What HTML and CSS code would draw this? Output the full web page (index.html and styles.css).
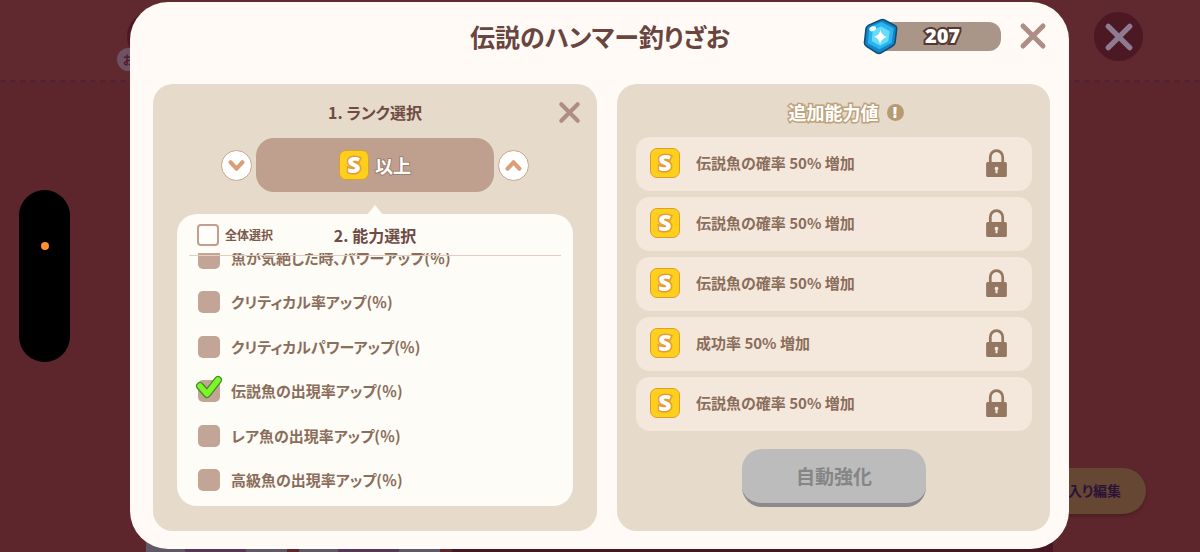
FILE: index.html
```html
<!DOCTYPE html>
<html lang="ja">
<head>
<meta charset="utf-8">
<meta name="viewport" content="width=device-width, initial-scale=1">
<title>伝説のハンマー釣りざお</title>
<link rel="stylesheet" href="styles.css">
</head>
<body>
<svg class="sprites" aria-hidden="true">
  <symbol id="cross" viewBox="0 0 28 28"><path d="M4 4 24 24M24 4 4 24" fill="none" stroke="currentColor" stroke-width="5" stroke-linecap="round"/></symbol>
  <symbol id="chevron" viewBox="0 0 16 12"><path d="M2.500 3 8 9l5.500-6" fill="none" stroke="currentColor" stroke-width="4" stroke-linecap="round" stroke-linejoin="round"/></symbol>
  <symbol id="lock" viewBox="0 0 20 27"><path d="M4 13V8a6 6.500 0 0 1 12 0v5" fill="none" stroke="currentColor" stroke-width="2.600"/><path fill="currentColor" fill-rule="evenodd" d="M1.500 12.500h17a1.500 1.500 0 0 1 1.500 1.500v11.500a1.500 1.500 0 0 1-1.500 1.500h-17A1.500 1.500 0 0 1 0 25.500V14a1.500 1.500 0 0 1 1.500-1.500ZM10 17a1.800 1.800 0 0 0-1 3.300V23.500h2V20.300A1.800 1.800 0 0 0 10 17Z"/></symbol>
  <symbol id="tick" viewBox="0 0 28 24"><path d="M5 11 12 19 23 5" fill="none" stroke="#3d8f22" stroke-width="8" stroke-linecap="round" stroke-linejoin="round"/><path d="M5 11 12 19 23 5" fill="none" stroke="#7df52a" stroke-width="5.500" stroke-linecap="round" stroke-linejoin="round"/></symbol>
</svg>

<div class="scene">
  <div class="backdrop" aria-hidden="true">
    <div class="backdrop-bar">
      <span class="bubble"><span class="bubble-tag">お</span></span>
      <span class="back-close"><svg><use href="#cross"/></svg></span>
    </div>
    <div class="backdrop-floor"><span class="edit-pill">お気に入り編集</span></div>
    <div class="slots"><i class="slot"></i><i class="slot"></i><i class="shelf"></i></div>
  </div>

  <div class="notch" aria-hidden="true"><i class="notch-light"></i></div>

  <main class="dialog" role="dialog" aria-labelledby="dialog-title">
    <header class="dialog-head">
      <h1 id="dialog-title" class="dialog-title">伝説のハンマー釣りざお</h1>
      <div class="head-tools">
        <div class="wallet">
          <svg class="gem" viewBox="0 0 36 38" aria-hidden="true">
            <path d="M18 2Q20 1 22 2L33 8Q35 9 34.500 12L33 25Q32.500 28 30 29L19 35.500Q17 37 14.500 36L4 29.500Q1.500 28 1.500 25.500L3 12Q3 9 5.500 7.500Z" fill="#1387c9" stroke="#0c4c79" stroke-width="1.600"/>
            <path d="M19 4 31.500 10.500 29.500 25.500 17 32 5 26 6.500 10Z" fill="#2cb4ed"/>
            <path d="M18.500 8.500 27.500 13.500 26 24 17.500 28.500 9 23.500 10 13Z" fill="#66dcf8"/>
            <ellipse cx="10" cy="11" rx="3.600" ry="2.500" transform="rotate(-20 10 11)" fill="#eaffff"/>
            <path d="M18 12Q19 18 24.500 19.500 19 21 17.500 27 16.500 21 11.500 19 17 18 18 12Z" fill="#fff"/>
          </svg>
          <span class="wallet-count">207</span>
        </div>
        <button class="icon-button" type="button" aria-label="閉じる"><svg class="cross-large"><use href="#cross"/></svg></button>
      </div>
    </header>

    <div class="panels">
      <section class="panel">
        <div class="panel-head">
          <h2 class="step-title">1. ランク選択</h2>
          <button class="icon-button panel-close" type="button" aria-label="選択を閉じる"><svg class="cross-small"><use href="#cross"/></svg></button>
        </div>
        <div class="rank">
          <button class="round-button" type="button" aria-label="ランクを下げる"><svg class="chevron"><use href="#chevron"/></svg></button>
          <div class="rank-value"><span class="badge">S</span><span class="rank-text">以上</span></div>
          <button class="round-button" type="button" aria-label="ランクを上げる"><svg class="chevron chevron-up"><use href="#chevron"/></svg></button>
        </div>
        <div class="ability">
          <div class="ability-head">
            <label class="select-all"><input class="box box-empty" type="checkbox">全体選択</label>
            <h2 class="step-title">2. 能力選択</h2>
          </div>
          <div class="ability-clip">
            <ul class="ability-list">
              <li><label class="option"><span class="box-wrap"><input class="box" type="checkbox"><svg class="tick"><use href="#tick"/></svg></span>魚が気絶した時､パワーアップ(％)</label></li>
              <li><label class="option"><span class="box-wrap"><input class="box" type="checkbox"><svg class="tick"><use href="#tick"/></svg></span>クリティカル率アップ(％)</label></li>
              <li><label class="option"><span class="box-wrap"><input class="box" type="checkbox"><svg class="tick"><use href="#tick"/></svg></span>クリティカルパワーアップ(％)</label></li>
              <li><label class="option"><span class="box-wrap"><input class="box" type="checkbox" checked><svg class="tick"><use href="#tick"/></svg></span>伝説魚の出現率アップ(％)</label></li>
              <li><label class="option"><span class="box-wrap"><input class="box" type="checkbox"><svg class="tick"><use href="#tick"/></svg></span>レア魚の出現率アップ(％)</label></li>
              <li><label class="option"><span class="box-wrap"><input class="box" type="checkbox"><svg class="tick"><use href="#tick"/></svg></span>高級魚の出現率アップ(％)</label></li>
            </ul>
          </div>
        </div>
      </section>

      <section class="panel panel-stats">
        <div class="stats-head">
          <h2 class="stats-title">追加能力値</h2>
          <button class="info" type="button" aria-label="説明">!</button>
        </div>
        <ul class="stats">
          <li class="stat"><span class="badge">S</span><span class="stat-text">伝説魚の確率 50% 増加</span><svg class="lock"><use href="#lock"/></svg></li>
          <li class="stat"><span class="badge">S</span><span class="stat-text">伝説魚の確率 50% 増加</span><svg class="lock"><use href="#lock"/></svg></li>
          <li class="stat"><span class="badge">S</span><span class="stat-text">伝説魚の確率 50% 増加</span><svg class="lock"><use href="#lock"/></svg></li>
          <li class="stat"><span class="badge">S</span><span class="stat-text">成功率 50% 増加</span><svg class="lock"><use href="#lock"/></svg></li>
          <li class="stat"><span class="badge">S</span><span class="stat-text">伝説魚の確率 50% 増加</span><svg class="lock"><use href="#lock"/></svg></li>
        </ul>
        <button class="enhance" type="button" disabled>自動強化</button>
      </section>
    </div>
  </main>
</div>
</body>
</html>
```

FILE: styles.css
```css
* { box-sizing: border-box; }

body {
  margin: 0;
  background: #5c262c;
  color: #8b6d5b;
  font-family: "Noto Sans CJK JP", sans-serif;
  font-feature-settings: "palt";
  font-size: 15px;
  font-weight: 700;
  line-height: 24px;
}

h1, h2, ul { margin: 0; padding: 0; }
ul { list-style: none; }
button { padding: 0; border: 0; background: none; font: inherit; cursor: pointer; }
svg { display: block; }
.sprites { position: absolute; width: 0; height: 0; }

.scene {
  position: relative;
  display: flex;
  min-height: 100vh;
  padding: 2px 131px 3px 130px;
  overflow: hidden;
}

/* Dimmed screen behind the dialog */
.backdrop {
  position: absolute;
  inset: 0;
  display: flex;
  flex-direction: column;
}
.backdrop-bar {
  display: flex;
  justify-content: space-between;
  height: 82px;
  padding: 12px 57px 0 127px;
  background: #60292f;
  border-bottom: 2px dashed #522230;
}
.bubble {
  position: relative;
  width: 49px;
  height: 49px;
  border-radius: 50%;
  background: #4b1824;
}
.bubble-tag {
  position: absolute;
  left: -10px;
  top: 36px;
  width: 30px;
  height: 23px;
  padding-left: 6px;
  border-radius: 12px;
  background: #6c5262;
  color: #55192f;
  font-size: 12px;
  line-height: 23px;
}
.back-close {
  display: grid;
  place-items: center;
  width: 49px;
  height: 49px;
  border-radius: 50%;
  background: #4b1824;
  color: #8e7b91;
}
.back-close svg { width: 30px; height: 30px; }
.backdrop-floor {
  display: flex;
  flex: 1;
  align-items: flex-end;
  justify-content: flex-end;
  padding: 0 54px 28px 0;
}
.edit-pill {
  padding: 10px 25px 12px 28px;
  border-radius: 23px;
  background: #664734;
  box-shadow: 0 2px 3px #4d1d23;
  color: #2b1337;
  font-size: 14px;
}
.slots {
  display: flex;
  gap: 12px;
  height: 10px;
  padding: 0 147px 0 146px;
}
.slot {
  width: 141px;
  background: linear-gradient(90deg, #605965 28%, #55375a 28% 71%, #605965 71%);
}
.shelf { flex: 1; background: #451722; }

.notch {
  position: absolute;
  left: 19px;
  top: calc(50% - 86px);
  display: flex;
  justify-content: center;
  width: 51px;
  height: 172px;
  padding-top: 52px;
  border-radius: 26px;
  background: #000;
}
.notch-light { width: 8px; height: 8px; border-radius: 50%; background: #ff922e; }

/* Dialog */
.dialog {
  position: relative;
  display: flex;
  flex: 1;
  flex-direction: column;
  min-width: 0;
  padding: 0 19px 18px 23px;
  border-radius: 38px;
  background: #fffaf5;
}
.dialog-head {
  display: grid;
  grid-template-columns: 1fr auto 1fr;
  align-items: center;
  height: 82px;
  padding: 0 3px 14px 0;
}
.dialog-title {
  grid-column: 2;
  color: #68453e;
  font-size: 25px;
  font-weight: 700;
  line-height: 40px;
}
.head-tools {
  display: flex;
  align-items: center;
  justify-content: flex-end;
  gap: 18px;
}
.wallet {
  display: flex;
  align-items: center;
  width: 138px;
  height: 29px;
  border-radius: 12px;
  background: linear-gradient(90deg, transparent 20px, #a99689 20px);
}
.gem { flex: none; width: 35px; height: 37px; }
.wallet-count {
  flex: 1;
  padding-right: 14px;
  color: #fff;
  font-family: "Noto Sans", sans-serif;
  font-size: 20px;
  font-weight: 900;
  text-align: center;
  -webkit-text-stroke: 4px #55382f;
  paint-order: stroke fill;
}
.icon-button { color: #ae8d87; }
.cross-large { width: 28px; height: 28px; }
.cross-small { width: 23px; height: 23px; }

.panels {
  display: grid;
  flex: 1;
  grid-template-columns: 444fr 433fr;
  gap: 20px;
}
.panel {
  display: flex;
  flex-direction: column;
  min-width: 0;
  padding: 16px 24px 25px;
  border-radius: 20px;
  background: #e6daca;
}
.panel-head {
  display: grid;
  grid-template-columns: 1fr auto 1fr;
  align-items: center;
  margin: 0 -8px;
}
.panel-head .step-title { grid-column: 2; }
.panel-close { justify-self: end; }
.step-title {
  color: #6f4b43;
  font-size: 16px;
  font-weight: 700;
  line-height: 24px;
}

.rank {
  display: flex;
  align-items: center;
  justify-content: center;
  gap: 4px;
  margin-top: 14px;
}
.rank-value {
  display: flex;
  flex: 0 1 238px;
  align-items: center;
  justify-content: center;
  gap: 6px;
  height: 54px;
  border-radius: 18px;
  background: #bfa08f;
}
.rank-text {
  color: #fff;
  font-size: 18px;
  -webkit-text-stroke: 2px #a07f6c;
  paint-order: stroke fill;
}
.round-button {
  display: grid;
  place-items: center;
  width: 31px;
  height: 31px;
  border: 1px solid #caa78d;
  border-radius: 50%;
  background: #fff;
  color: #dc9e77;
}
.chevron { width: 17px; height: 13px; }
.chevron-up { transform: rotate(180deg); }

.badge {
  flex: none;
  width: 30px;
  height: 30px;
  border: 1px solid #dc9f2e;
  border-radius: 7px;
  background: #ffcf1d;
  color: #fff;
  font-family: "Noto Sans", sans-serif;
  font-size: 23px;
  font-weight: 900;
  line-height: 26px;
  text-align: center;
  -webkit-text-stroke: 3px #e69c35;
  paint-order: stroke fill;
}

.ability {
  position: relative;
  display: flex;
  flex: 1;
  flex-direction: column;
  margin-top: 22px;
  border-radius: 20px;
  background: #fdfcf6;
}
.ability::before {
  content: "";
  position: absolute;
  left: calc(50% - 8px);
  top: -9px;
  border: solid transparent;
  border-width: 0 8px 10px;
  border-bottom-color: #fdfcf6;
}
.ability-head {
  position: relative;
  z-index: 1;
  display: grid;
  grid-template-columns: 1fr auto 1fr;
  align-items: center;
  height: 42px;
  margin: 0 12px;
  padding: 0 8px;
  border-bottom: 1px solid #dfcdbf;
}
.select-all {
  display: flex;
  align-items: center;
  gap: 6px;
  color: #7b5a4c;
  font-size: 12px;
}
.box {
  display: block;
  width: 22px;
  height: 22px;
  margin: 0;
  border-radius: 5px;
  background: #c2a596;
  appearance: none;
}
.box-empty { border: 2px solid #c09f8e; border-radius: 4px; background: #fffdf9; }
.ability-clip {
  display: flex;
  flex: 1;
  flex-direction: column;
  margin-top: -3px;
  overflow: hidden;
  border-radius: 0 0 20px 20px;
}
.ability-list {
  display: flex;
  flex: 1;
  flex-direction: column;
  justify-content: space-between;
  margin-top: -7px;
  padding: 0 21px 14px;
}
.option {
  display: flex;
  align-items: center;
  gap: 11px;
  height: 24px;
  white-space: nowrap;
}
.box-wrap { position: relative; }
.tick {
  position: absolute;
  left: -3px;
  top: -5px;
  display: none;
  width: 28px;
  height: 24px;
  overflow: visible;
}
.box:checked + .tick { display: block; }

/* Bonus stats */
.panel-stats { padding: 16px 18px 24px 19px; }
.stats-head {
  display: flex;
  align-items: center;
  justify-content: center;
  gap: 8px;
  padding-left: 24px;
}
.stats-title {
  color: #fff;
  font-size: 18px;
  font-weight: 700;
  line-height: 24px;
  -webkit-text-stroke: 3px #bea27c;
  paint-order: stroke fill;
}
.info {
  width: 17px;
  height: 17px;
  border-radius: 50%;
  background: #b59a72;
  color: #fff;
  font-family: "Noto Sans", sans-serif;
  font-size: 15px;
  font-weight: 900;
  line-height: 17px;
}
.stats { display: grid; gap: 6px; margin-top: 13px; }
.stat {
  display: flex;
  align-items: center;
  height: 54px;
  padding: 0 25px 2px 14px;
  border-radius: 14px;
  background: #f4e8dc;
}
.stat-text { flex: 1; padding-left: 16px; }
.lock { width: 21px; height: 28px; color: #937760; }
.enhance {
  align-self: center;
  width: 184px;
  height: 58px;
  margin-top: 18px;
  border-bottom: 4px solid #8c8a8d;
  border-radius: 20px;
  background: #bcbcbc;
  color: #858585;
  font-size: 19px;
}
```
